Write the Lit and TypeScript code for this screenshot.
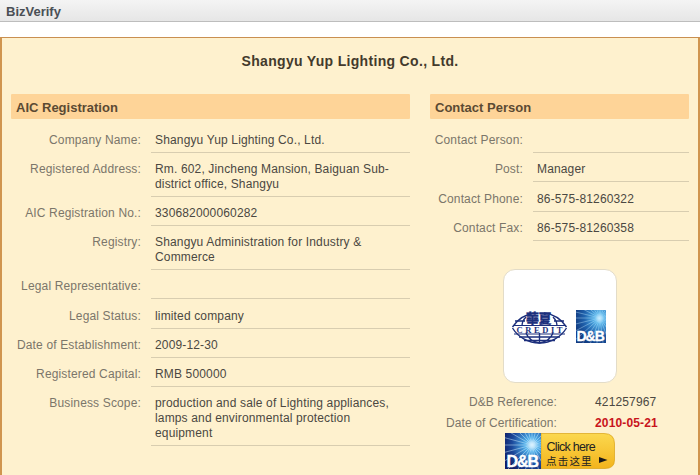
import { LitElement, html, css, svg } from "lit";
import { customElement } from "lit/decorators.js";

const aic: [string, string, boolean?][] = [
  ["Company Name:", "Shangyu Yup Lighting Co., Ltd."],
  ["Registered Address:", "Rm. 602, Jincheng Mansion, Baiguan Sub-district office, Shangyu"],
  ["AIC Registration No.:", "330682000060282"],
  ["Registry:", "Shangyu Administration for Industry & Commerce"],
  ["Legal Representative:", ""],
  ["Legal Status:", "limited company", true],
  ["Date of Establishment:", "2009-12-30"],
  ["Registered Capital:", "RMB 500000"],
  ["Business Scope:", "production and sale of Lighting appliances, lamps and environmental protection equipment"],
];
const contact: [string, string, boolean?][] = [
  ["Contact Person:", ""],
  ["Post:", "Manager"],
  ["Contact Phone:", "86-575-81260322", true],
  ["Contact Fax:", "86-575-81260358"],
];

const rays = (cx: number, cy: number, r: number, n: number, w: number, c: string) =>
  Array.from({ length: n }, (_, i) => {
    const a = (i / n) * Math.PI * 2;
    return svg`<line x1=${cx} y1=${cy} x2=${cx + Math.cos(a) * r} y2=${cy + Math.sin(a) * r} stroke=${c} stroke-width=${w}/>`;
  });

@customElement("app-root")
export class AppRoot extends LitElement {
  static styles = css`
    :host { display: block; width: 700px; height: 475px; overflow: hidden; font-family: "Liberation Sans", Arial, sans-serif; font-size: 12px; letter-spacing: .15px; background: #fff; }
    .top { height: 21px; border-bottom: 1px solid #bdbdbd; background: linear-gradient(#f4f4f4, #e6e6e6); padding-left: 6px; font-weight: bold; font-size: 13px; line-height: 23px; color: #4a4f55; letter-spacing: 0; }
    .panel { margin-top: 15px; height: 440px; box-sizing: border-box; border-top: 1px solid #c98f50; border-left: 2px solid #d0954f; border-right: 2px solid #d0954f; background: #fef1ce; padding: 0 9px; }
    h1 { margin: 0; padding-top: 15px; height: 56px; box-sizing: border-box; text-align: center; font-size: 14px; line-height: 16px; color: #433a2c; letter-spacing: .32px; }
    .cols { display: flex; gap: 20px; }
    .left { width: 399px; }
    .right { width: 259px; }
    h2 { margin: 0 0 5px; height: 25px; border-radius: 1px; background: #fed498; padding-left: 5px; font-size: 13px; line-height: 27px; color: #5b4a33; letter-spacing: 0; }
    .row { display: grid; column-gap: 10px; }
    .left .row { grid-template-columns: 130px 259px; }
    .right .row { grid-template-columns: 93px 156px; }
    .k { text-align: right; color: #7b766a; padding-top: 9px; line-height: 15px; letter-spacing: .15px; }
    .v { border-bottom: 1px solid #d8cdb0; padding: 9px 6px 4px 4px; line-height: 15px; color: #4b4842; min-height: 15px; }
    .row.low .k { padding-top: 10px; }
    .row.low .v { padding-top: 10px; }
    .cert { display: flex; flex-direction: column; align-items: center; }
    .logo { box-sizing: border-box; width: 114px; height: 114px; margin: 28px 0 0 1px; padding-top: 3px; border: 1px solid #e3dcc8; border-radius: 12px; background: #fff; display: flex; align-items: center; justify-content: center; }
    .meta { align-self: stretch; display: grid; grid-template-columns: 127px 132px; margin-top: 12px; line-height: 15px; row-gap: 6px; }
    .meta .mk { text-align: right; color: #7b766a; letter-spacing: .1px; }
    .meta .mv { padding-left: 38px; color: #4b4842; }
    .meta .red { color: #c8141c; font-weight: bold; }
    .btn { display: block; width: 110px; height: 36px; margin: 2px 0 0 1px; cursor: pointer; }
    svg { display: block; }
    .lt { font-family: "Liberation Serif", serif; font-size: 8.5px; fill: #1c2f7c; font-weight: bold; letter-spacing: 0; }
    .lc { font-family: "Noto Sans CJK TC", sans-serif; font-size: 13px; font-weight: 900; fill: #1c2f7c; stroke: #1c2f7c; stroke-width: .35px; letter-spacing: -.5px; }
    .db { font-family: "Liberation Sans", sans-serif; font-weight: bold; fill: #fff; stroke: #fff; stroke-width: .3px; letter-spacing: -1px; }
    .bt { font-family: "Liberation Sans", sans-serif; font-size: 12.5px; fill: #222; letter-spacing: -.7px; }
    .bc { font-family: "Noto Sans CJK SC", sans-serif; font-size: 10.5px; fill: #222; letter-spacing: 1.2px; }
  `;

  private rows(list: [string, string, boolean?][]) {
    return list.map(([k, v, low]) => html`<div class="row ${low ? "low" : ""}"><div class="k">${k}</div><div class="v">${v}</div></div>`);
  }

  render() {
    return html`
      <div class="top">BizVerify</div>
      <div class="panel">
        <h1>Shangyu Yup Lighting Co., Ltd.</h1>
        <div class="cols">
          <div class="left"><h2>AIC Registration</h2>${this.rows(aic)}</div>
          <div class="right">
            <h2>Contact Person</h2>${this.rows(contact)}
            <div class="cert">
              <div class="logo">
                <svg width="98" height="37" viewBox="0 0 98 37">
                  <defs>
                    <clipPath id="sq"><rect x="65" y="1" width="30" height="33"/></clipPath>
                    <radialGradient id="g1" cx=".78" cy=".25" r=".85"><stop offset="0" stop-color="#d8f2ff"/><stop offset=".18" stop-color="#55b4ea"/><stop offset=".6" stop-color="#1f62ad"/><stop offset="1" stop-color="#123a80"/></radialGradient>
                  </defs>
                  <g fill="none" stroke="#1c2f7c" stroke-width="1.4">
                    <path d="M1.500 18C7 10 15 5 24 4M33 4C43 5 50 10 55.500 18M1.500 19C7 28 17 34 28.500 34C40 34 50 28 55.500 19"/>
                    <path d="M15 8C12 11 11 14 11 17M42 8C45 11 46 14 46 17M15 24C17 29 22 33 28.500 34C35 33 40 29 42 24M28.500 24V34M4 12H14M43 12H53M8 28H49M13 31.500H44"/>
                  </g>
                  <rect x="3" y="16" width="51" height="1" fill="#1c2f7c"/>
                  <rect x="3" y="24.500" width="51" height="1" fill="#1c2f7c"/>
                  <text class="lc" x="15" y="14">華夏</text>
                  <text class="lt" x="5.500" y="23.500" textLength="46">CREDIT</text>
                  <rect x="65" y="1" width="30" height="33" fill="url(#g1)"/>
                  <g clip-path="url(#sq)" opacity=".5">${rays(89, 9, 40, 26, 0.8, "#bfe8ff")}</g>
                  <text class="db" x="65.500" y="32" font-size="14">D&amp;B</text>
                </svg>
              </div>
              <div class="meta">
                <div class="mk">D&amp;B Reference:</div><div class="mv">421257967</div>
                <div class="mk">Date of Certification:</div><div class="mv red">2010-05-21</div>
              </div>
              <svg class="btn" viewBox="0 0 110 36">
                <defs>
                  <clipPath id="bq"><rect x="0" y="0" width="36" height="36"/></clipPath>
                  <linearGradient id="y" x1="0" y1="0" x2="0" y2="1"><stop offset="0" stop-color="#fbd84f"/><stop offset="1" stop-color="#f3b41c"/></linearGradient>
                  <radialGradient id="b" cx=".75" cy=".33" r=".85"><stop offset="0" stop-color="#f0faff"/><stop offset=".22" stop-color="#4fb0ea"/><stop offset=".65" stop-color="#1c4a9c"/><stop offset="1" stop-color="#0e1c66"/></radialGradient>
                </defs>
                <path d="M36 .5H99Q109.500 .5 109.500 11V27Q109.500 35.500 100 35.500H36Z" fill="url(#y)" stroke="#d9a214" stroke-width=".7"/>
                <rect x="0" y="0" width="36" height="36" fill="url(#b)"/>
                <g clip-path="url(#bq)" opacity=".6">${rays(27, 12, 36, 24, 0.8, "#cfeeff")}</g>
                <text class="db" x="1.500" y="34" font-size="16">D&amp;B</text>
                <text class="bt" x="41.500" y="17.500">Click here</text>
                <text class="bc" x="41" y="31.500">点击这里</text>
                <path d="M94 24L102.500 27L94 30Z" fill="#1a1a1a"/>
              </svg>
            </div>
          </div>
        </div>
      </div>
    `;
  }
}
